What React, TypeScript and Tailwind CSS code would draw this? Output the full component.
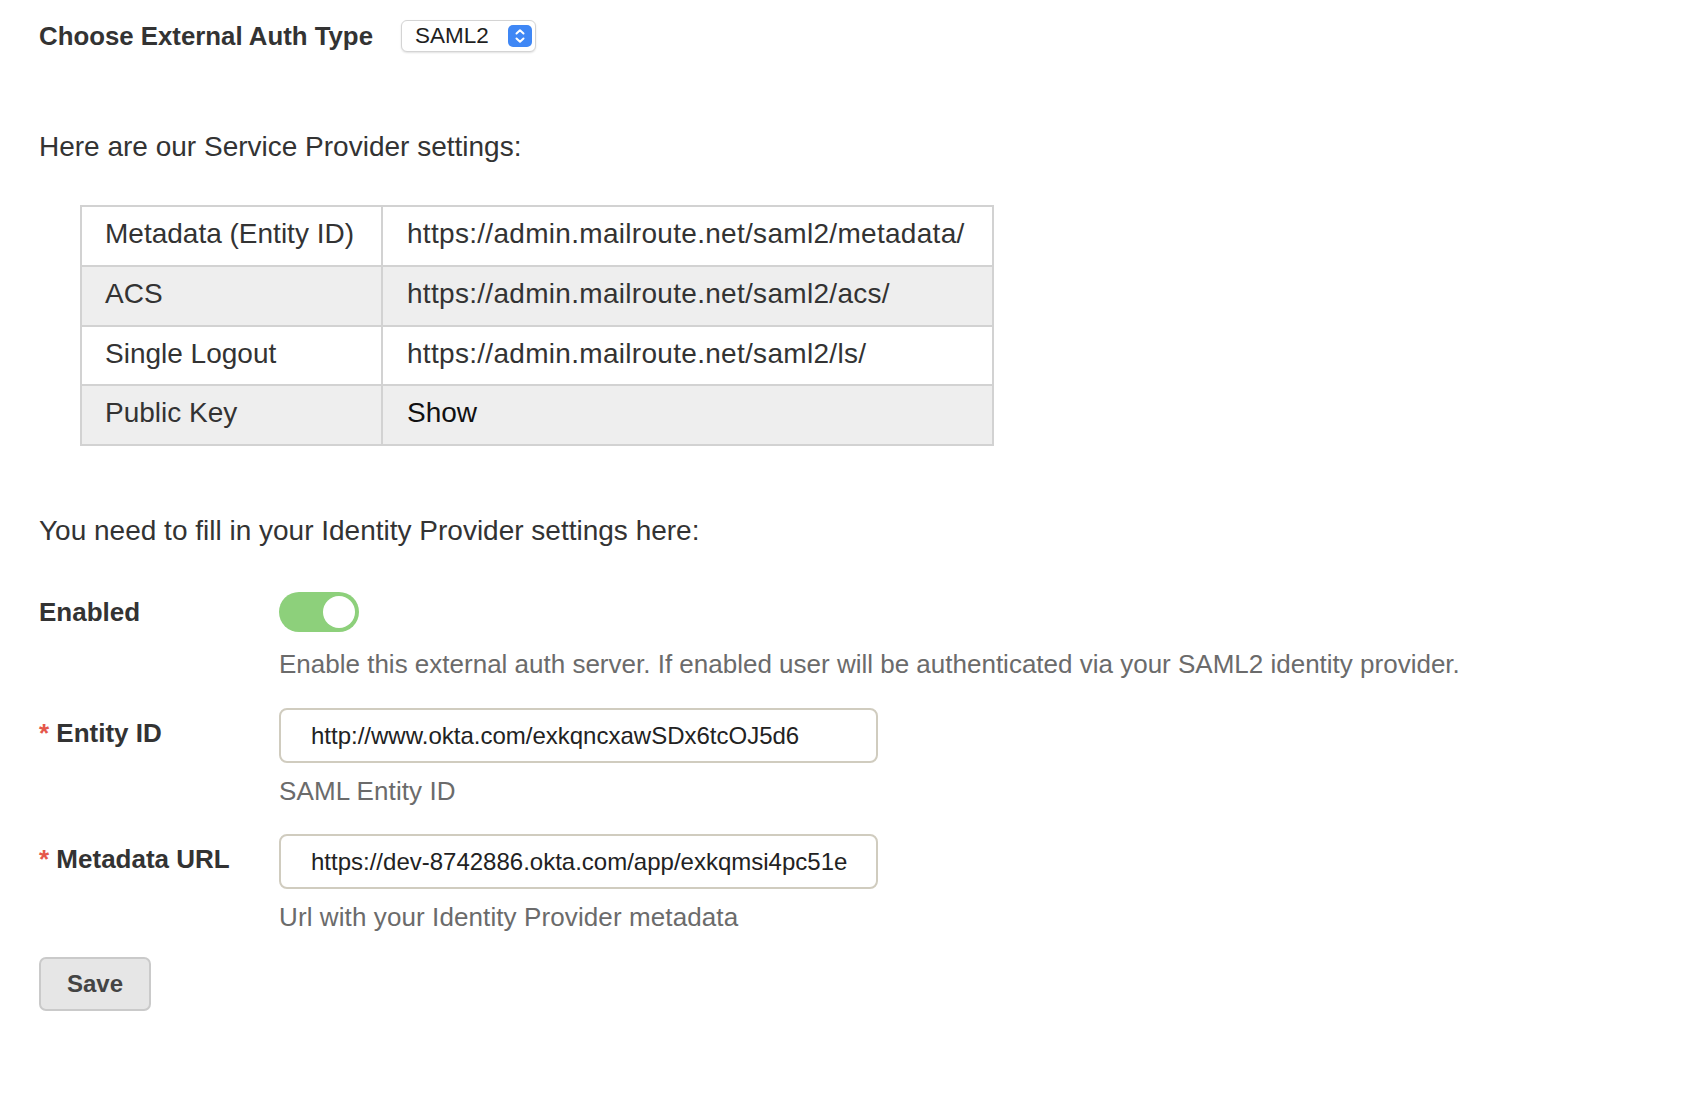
import React from "react";

const rows = [
  { k: "Metadata (Entity ID)", v: "https://admin.mailroute.net/saml2/metadata/", bg: "bg-white" },
  { k: "ACS", v: "https://admin.mailroute.net/saml2/acs/", bg: "bg-[#eeeeee]" },
  { k: "Single Logout", v: "https://admin.mailroute.net/saml2/ls/", bg: "bg-white" },
  { k: "Public Key", v: "Show", bg: "bg-[#eeeeee]" },
];

function Stepper() {
  return (
    <svg width="24" height="22" viewBox="0 0 24 22" className="block">
      <rect x="0" y="0" width="24" height="22" rx="5" fill="#3f87f5" />
      <path d="M8.5 8.5 L12 5.2 L15.5 8.5" fill="none" stroke="white" strokeWidth="2" strokeLinecap="round" strokeLinejoin="round" />
      <path d="M8.5 13.5 L12 16.8 L15.5 13.5" fill="none" stroke="white" strokeWidth="2" strokeLinecap="round" strokeLinejoin="round" />
    </svg>
  );
}

function Field({ label, value, help, first }: { label: string; value: string; help: string; first?: boolean }) {
  return (
    <div className={`flex ${first ? "mt-[26px]" : "mt-[25px]"}`}>
      <div className="w-[240px] shrink-0 pt-[7px] text-[26px] leading-[36px] font-bold text-[#333]">
        <span className="text-[#e5574b]">*</span> {label}
      </div>
      <div className="flex flex-col">
        <input
          readOnly
          value={value}
          className="w-[599px] h-[55px] border-2 border-[#d0ccbf] rounded-[8px] pl-[30px] pr-[12px] text-[24px] text-[#222] bg-white outline-none"
          style={{ fontFamily: '"Liberation Sans", Arial, sans-serif' }}
        />
        <div className="mt-[10px] text-[26px] leading-[36px] text-[#6b6b6b] tracking-[0.1px]">{help}</div>
      </div>
    </div>
  );
}

export default function App() {
  return (
    <div
      className="min-h-screen bg-white pl-[39px] pt-[20px] text-[#333]"
      style={{ fontFamily: '"Liberation Sans", Arial, Helvetica, sans-serif' }}
    >
      <div className="flex items-center h-[32px]">
        <span className="text-[25.8px] leading-[32px] font-bold text-[#333]">Choose External Auth Type</span>
        <div className="ml-[28px] w-[135px] h-[32px] rounded-[6px] border border-[#d4d4d4] bg-white shadow-[0_1px_2px_rgba(0,0,0,0.12)] flex items-center justify-between pl-[13px] pr-[3px]">
          <span className="text-[22.5px] leading-[26px] text-[#1f1f1f]">SAML2</span>
          <Stepper />
        </div>
      </div>

      <p className="mt-[75px] text-[28px] leading-[40px] text-[#333]">Here are our Service Provider settings:</p>

      <div className="mt-[38px] ml-[41px] w-[914px] border-t-2 border-l-2 border-[#d2d2d2]">
        {rows.map((r) => (
          <div key={r.k} className={`flex h-[59.75px] ${r.bg}`}>
            <div className="w-[301px] shrink-0 border-r-2 border-b-2 border-[#d2d2d2] pl-[23px] pt-[11px] text-[28px] leading-[32px] text-[#333]">
              {r.k}
            </div>
            <div
              className={`flex-1 border-r-2 border-b-2 border-[#d2d2d2] pl-[24px] pt-[11px] text-[28px] leading-[32px] ${
                r.v === "Show" ? "text-[#111]" : "text-[#333] tracking-[0.3px]"
              }`}
            >
              {r.v}
            </div>
          </div>
        ))}
      </div>

      <p className="mt-[65px] text-[28px] leading-[40px] text-[#333]">You need to fill in your Identity Provider settings here:</p>

      <div className="flex mt-[41px]">
        <div className="w-[240px] shrink-0 text-[26px] leading-[40px] font-bold text-[#333]">Enabled</div>
        <div className="flex flex-col">
          <div className="w-[80px] h-[40px] rounded-full bg-[#8dd07b] flex items-center justify-end pr-[4px]">
            <div className="w-[32px] h-[32px] rounded-full bg-white" />
          </div>
          <div className="mt-[14px] text-[26px] leading-[36px] text-[#6b6b6b]">
            Enable this external auth server. If enabled user will be authenticated via your SAML2 identity provider.
          </div>
        </div>
      </div>

      <Field first label="Entity ID" value="http://www.okta.com/exkqncxawSDx6tcOJ5d6" help="SAML Entity ID" />
      <Field
        label="Metadata URL"
        value="https://dev-8742886.okta.com/app/exkqmsi4pc51e"
        help="Url with your Identity Provider metadata"
      />

      <button className="mt-[22px] w-[112px] h-[54px] rounded-[7px] border-2 border-[#cacaca] bg-[#e6e6e6] text-[24px] font-bold text-[#444]">
        Save
      </button>
    </div>
  );
}
